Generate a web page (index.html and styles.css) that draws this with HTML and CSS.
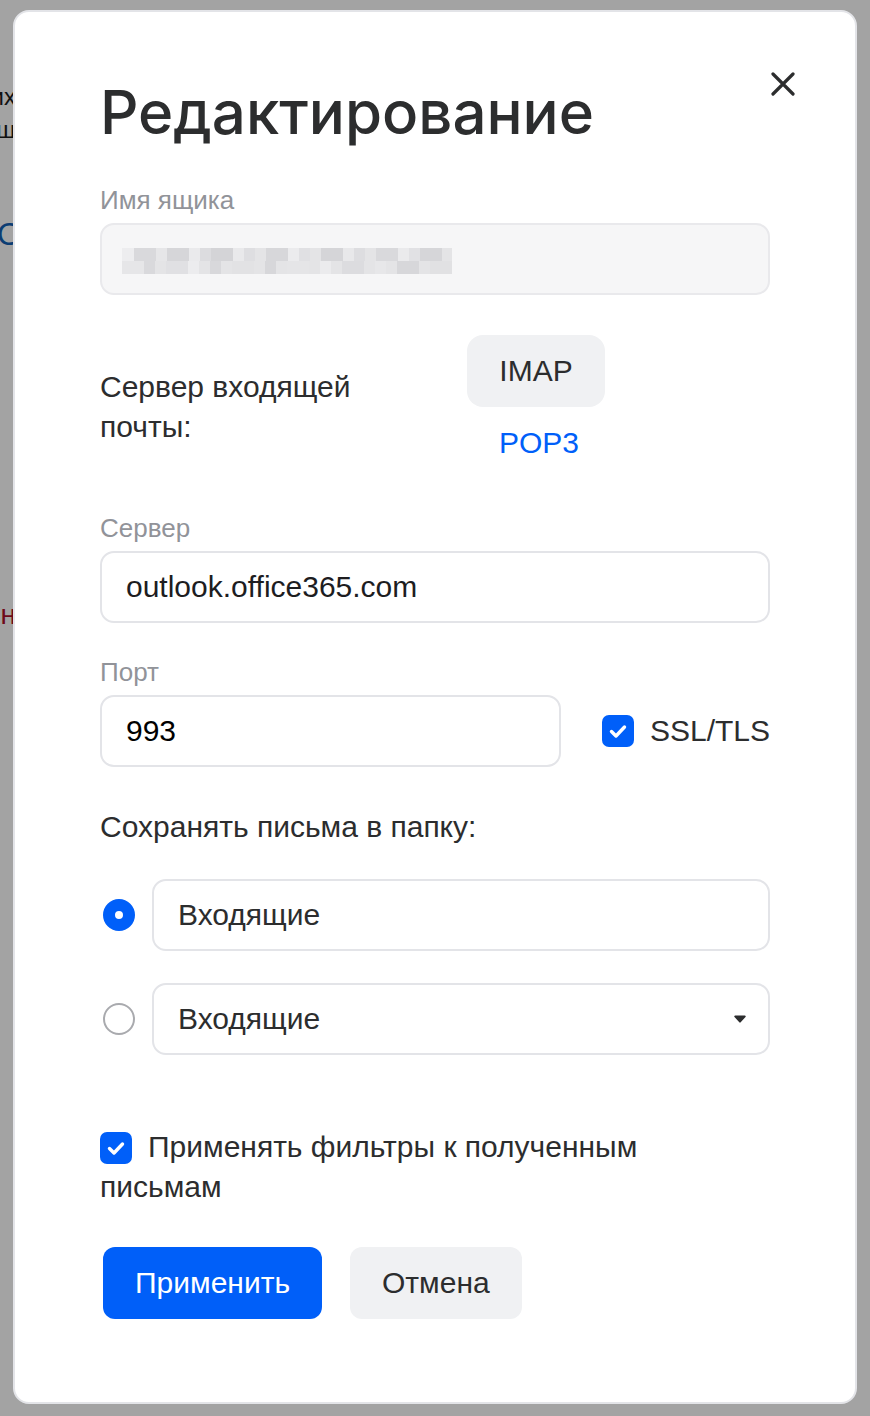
FILE: index.html
```html
<!DOCTYPE html>
<html lang="ru">
<head>
    <meta charset="UTF-8">
    <meta name="viewport" content="width=device-width, initial-scale=1.0">
    <title>Редактирование</title>
    <link rel="stylesheet" href="styles.css">
</head>
<body>
    <!-- Page under the overlay (mostly hidden by the modal) -->
    <div class="page">
        <div class="bg-line">Для входящих</div>
        <div class="bg-line second">ящ</div>
        <div class="bg-line link">О</div>
        <div class="bg-line warn">Выключен</div>
    </div>

    <!-- Edit mailbox modal -->
    <div class="modal">
        <button class="close-btn" aria-label="Закрыть">
            <svg width="24" height="24" viewBox="0 0 24 24">
                <path d="M2 2L22 22M22 2L2 22" stroke="#2c2d2e" stroke-width="3.2" stroke-linecap="round" fill="none"/>
            </svg>
        </button>

        <h2 class="modal-title">Редактирование</h2>

        <div class="field">
            <div class="field-label">Имя ящика</div>
            <div class="input disabled">
                <svg class="mosaic" width="330" height="26" viewBox="0 0 330 26">
                    <rect width="330" height="26" fill="#e4e4e6"/>
                    <rect x="0" y="0" width="12" height="13" fill="#ededef"/>
                    <rect x="12" y="0" width="22" height="13" fill="#d9d9dc"/>
                    <rect x="34" y="0" width="11" height="13" fill="#e6e6e8"/>
                    <rect x="45" y="0" width="22" height="13" fill="#d6d6d9"/>
                    <rect x="67" y="0" width="11" height="13" fill="#eaeaec"/>
                    <rect x="78" y="0" width="11" height="13" fill="#dcdcdf"/>
                    <rect x="89" y="0" width="22" height="13" fill="#d4d4d7"/>
                    <rect x="111" y="0" width="11" height="13" fill="#e9e9eb"/>
                    <rect x="122" y="0" width="11" height="13" fill="#dedee1"/>
                    <rect x="144" y="0" width="22" height="13" fill="#d7d7da"/>
                    <rect x="166" y="0" width="11" height="13" fill="#ebebed"/>
                    <rect x="177" y="0" width="11" height="13" fill="#e0e0e3"/>
                    <rect x="199" y="0" width="22" height="13" fill="#d5d5d8"/>
                    <rect x="221" y="0" width="11" height="13" fill="#e8e8ea"/>
                    <rect x="232" y="0" width="11" height="13" fill="#dddde0"/>
                    <rect x="254" y="0" width="22" height="13" fill="#d9d9dc"/>
                    <rect x="276" y="0" width="11" height="13" fill="#eaeaec"/>
                    <rect x="287" y="0" width="11" height="13" fill="#e1e1e4"/>
                    <rect x="298" y="0" width="22" height="13" fill="#d6d6d9"/>
                    <rect x="0" y="13" width="22" height="13" fill="#e6e6e8"/>
                    <rect x="22" y="13" width="11" height="13" fill="#d9d9dc"/>
                    <rect x="44" y="13" width="22" height="13" fill="#e0e0e3"/>
                    <rect x="66" y="13" width="11" height="13" fill="#ececee"/>
                    <rect x="88" y="13" width="11" height="13" fill="#d8d8db"/>
                    <rect x="110" y="13" width="22" height="13" fill="#e2e2e4"/>
                    <rect x="143" y="13" width="11" height="13" fill="#d7d7da"/>
                    <rect x="165" y="13" width="22" height="13" fill="#e5e5e7"/>
                    <rect x="198" y="13" width="11" height="13" fill="#ebebed"/>
                    <rect x="220" y="13" width="22" height="13" fill="#dcdcdf"/>
                    <rect x="253" y="13" width="11" height="13" fill="#e7e7e9"/>
                    <rect x="275" y="13" width="22" height="13" fill="#d7d7da"/>
                    <rect x="308" y="13" width="22" height="13" fill="#e1e1e3"/>
                </svg>
            </div>
        </div>

        <div class="protocol-row">
            <div class="protocol-label">Сервер входящей почты:</div>
            <div class="segmented">
                <button class="seg-item active">IMAP</button>
                <button class="seg-item">POP3</button>
            </div>
        </div>

        <div class="field spaced">
            <div class="field-label">Сервер</div>
            <input class="input" type="text" value="outlook.office365.com">
        </div>

        <div class="field spaced">
            <div class="field-label">Порт</div>
            <div class="port-row">
                <input class="input port" type="text" value="993">
                <label class="check-label">
                    <span class="checkbox">
                        <svg width="32" height="32" viewBox="0 0 32 32"><path d="M9.5 16.5L14 21L22.5 12" stroke="#fff" stroke-width="3.4" stroke-linecap="round" stroke-linejoin="round" fill="none"/></svg>
                    </span>
                    SSL/TLS
                </label>
            </div>
        </div>

        <p class="section-title">Сохранять письма в папку:</p>

        <div class="radio-row">
            <span class="radio checked"></span>
            <input class="input" type="text" value="Входящие">
        </div>
        <div class="radio-row">
            <span class="radio"></span>
            <div class="input select">
                <span>Входящие</span>
                <svg width="12" height="8" viewBox="0 0 12 8"><path d="M1.2 0.5h9.6a0.9 0.9 0 0 1 0.7 1.5L6.7 7.3a0.9 0.9 0 0 1-1.4 0L0.5 2a0.9 0.9 0 0 1 0.7-1.5z" fill="#2c2d2e"/></svg>
            </div>
        </div>

        <p class="filters">
            <span class="checkbox inline">
                <svg width="32" height="32" viewBox="0 0 32 32"><path d="M9.5 16.5L14 21L22.5 12" stroke="#fff" stroke-width="3.4" stroke-linecap="round" stroke-linejoin="round" fill="none"/></svg>
            </span>Применять фильтры к полученным письмам
        </p>

        <div class="actions">
            <button class="btn primary">Применить</button>
            <button class="btn secondary">Отмена</button>
        </div>
    </div>
</body>
</html>
```

FILE: styles.css
```css
* {
    box-sizing: border-box;
}
body {
    margin: 0;
    height: 100vh;
    overflow: hidden;
    position: relative;
    background-color: #a3a3a3;
    font-family: 'Liberation Sans', Arial, sans-serif;
    color: #2c2d2e;
}

/* page behind the overlay */
.page {
    padding-top: 82px;
}
.bg-line {
    display: flex;
    justify-content: flex-end;
    width: 16px;
    overflow: hidden;
    white-space: nowrap;
    font-size: 24px;
    line-height: 30px;
    color: #111;
}
.bg-line.second {
    margin-top: 3px;
}
.bg-line.link {
    margin-top: 69px;
    width: 22px;
    font-size: 32px;
    line-height: 40px;
    color: #0b3d73;
}
.bg-line.warn {
    margin-top: 343px;
    font-size: 28px;
    line-height: 36px;
    color: #6e0a1a;
}

/* modal */
.modal {
    position: absolute;
    top: 10px;
    left: 13px;
    width: 844px;
    padding: 64px 85px 83px;
    background-color: #ffffff;
    border: 2px solid #e3e4e8;
    border-radius: 16px;
}
.close-btn {
    position: absolute;
    top: 60px;
    right: 60px;
    width: 24px;
    height: 24px;
    padding: 0;
    border: none;
    background: none;
    cursor: pointer;
}
.close-btn svg {
    display: block;
}
.modal-title {
    margin: 0 0 34px;
    font-family: 'Inter', sans-serif;
    font-weight: 500;
    font-size: 60px;
    line-height: 72px;
    color: #2c2d2e;
}

.field-label {
    font-size: 26px;
    line-height: 36px;
    color: #919399;
    margin-bottom: 5px;
}
.field.spaced {
    margin-top: 31px;
}
.input {
    display: block;
    width: 100%;
    height: 72px;
    padding: 0 24px;
    border: 2px solid #e3e4e8;
    border-radius: 14px;
    background-color: #fff;
    font-family: 'Liberation Sans', Arial, sans-serif;
    font-size: 30px;
    color: #1d1d1f;
    outline: none;
}
.input.disabled {
    display: flex;
    align-items: center;
    padding-left: 20px;
    background-color: #f6f6f7;
    border-color: #e9e9ec;
}
.mosaic {
    display: block;
    margin-top: 4px;
}

/* IMAP / POP3 switch */
.protocol-row {
    display: flex;
    align-items: center;
    gap: 27px;
    margin-top: 40px;
}
.protocol-label {
    width: 340px;
    font-size: 30px;
    line-height: 40px;
}
.segmented {
    display: flex;
    flex-direction: column;
    width: 138px;
}
.seg-item {
    height: 72px;
    padding: 0 0 0 6px;
    border: none;
    border-radius: 16px;
    background: none;
    font-family: 'Liberation Sans', Arial, sans-serif;
    font-size: 30px;
    color: #005ff9;
    cursor: pointer;
}
.seg-item.active {
    padding: 0;
    background-color: #f0f1f3;
    color: #2c2d2e;
}

.port-row {
    display: flex;
    align-items: center;
    gap: 41px;
}
.input.port {
    flex: 1;
    color: #000;
}
.check-label {
    display: flex;
    align-items: center;
    gap: 16px;
    font-size: 30px;
    line-height: 40px;
}
.checkbox {
    display: inline-block;
    width: 32px;
    height: 32px;
    border-radius: 7px;
    background-color: #005ff9;
}
.checkbox svg {
    display: block;
}

.section-title {
    margin: 40px 0 32px;
    font-size: 30px;
    line-height: 40px;
}
.radio-row {
    display: flex;
    align-items: center;
    gap: 17px;
    padding-left: 3px;
    margin-bottom: 32px;
}
.radio-row .input {
    flex: 1;
    color: #2c2d2e;
}
.radio {
    flex: none;
    width: 32px;
    height: 32px;
    border-radius: 50%;
    border: 2px solid #a9aaae;
    background-color: #fff;
}
.radio.checked {
    border: 12px solid #005ff9;
}
.input.select {
    display: flex;
    align-items: center;
    justify-content: space-between;
    padding-right: 22px;
}

.filters {
    max-width: 600px;
    margin: 72px 0 40px;
    font-size: 30px;
    line-height: 40px;
}
.checkbox.inline {
    vertical-align: -7px;
    margin-right: 16px;
}

.actions {
    display: flex;
    gap: 28px;
    padding-left: 3px;
}
.btn {
    height: 72px;
    padding: 0 32px;
    border: none;
    border-radius: 12px;
    font-family: 'Liberation Sans', Arial, sans-serif;
    font-size: 30px;
    cursor: pointer;
}
.btn.primary {
    background-color: #005ff9;
    color: #fff;
}
.btn.secondary {
    background-color: #f0f1f3;
    color: #2c2d2e;
}
```
